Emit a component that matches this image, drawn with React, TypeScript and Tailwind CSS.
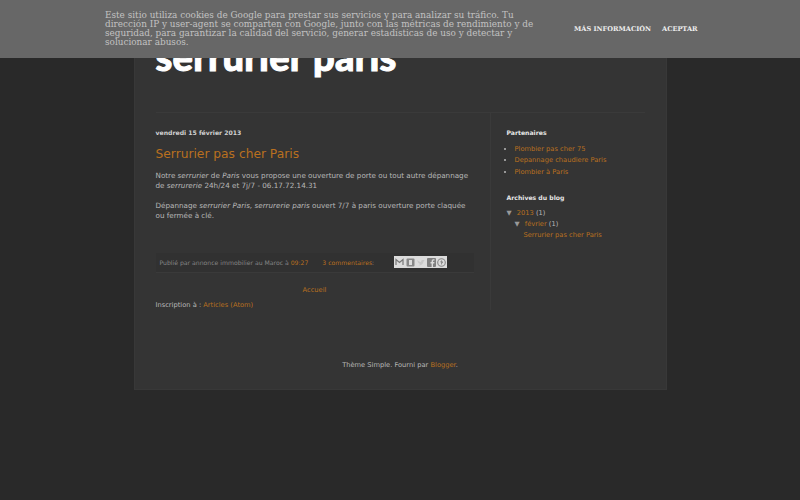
import React from 'react'

function ShareIcons() {
  return (
    <div className="flex ml-[20px] bg-[#dcdcdc] h-[12px] w-[53px] items-center">
      <span className="w-[10.6px] h-[12px] flex items-center justify-center">
        <svg width="9" height="8" viewBox="0 0 9 8"><path d="M1 7V1.500L4.500 4.500L8 1.500V7" fill="none" stroke="#777" strokeWidth="1.2" /></svg>
      </span>
      <span className="w-[10.6px] h-[12px] flex items-center justify-center">
        <svg width="9" height="9" viewBox="0 0 9 9"><rect x="0.5" y="0.5" width="8" height="8" rx="1" fill="#888" /><rect x="3" y="2" width="3" height="5" fill="#ddd" /></svg>
      </span>
      <span className="w-[10.6px] h-[12px] flex items-center justify-center">
        <svg width="9" height="9" viewBox="0 0 9 9"><path d="M1 2Q3 4 5 4Q5 1.500 7 2L8.500 2Q8 3 7.500 3.500Q7 7.500 2 7.500Q3.500 7 4 6Q2 5.500 1 2Z" fill="#c8c8c8" /></svg>
      </span>
      <span className="w-[10.6px] h-[12px] flex items-center justify-center">
        <svg width="9" height="9" viewBox="0 0 9 9"><rect width="9" height="9" rx="1" fill="#808080" /><path d="M6 9V5.500H7.200L7.400 4H6V3.200Q6 2.500 6.700 2.500H7.500V1.200H6.300Q4.600 1.200 4.600 3V4H3.500V5.500H4.600V9Z" fill="#dcdcdc" /></svg>
      </span>
      <span className="w-[10.6px] h-[12px] flex items-center justify-center">
        <svg width="9" height="9" viewBox="0 0 9 9"><circle cx="4.500" cy="4.500" r="3.800" fill="none" stroke="#888" strokeWidth="1.1" /><path d="M4.500 2.500V6.500M3.200 4Q4.500 2.500 5.800 4Q5.500 5.500 4.200 5" fill="none" stroke="#888" strokeWidth="0.9" /></svg>
      </span>
    </div>
  )
}

function A({ children }: { children: React.ReactNode }) {
  return <a className="text-[#b9701f]">{children}</a>
}

export default function App() {
  return (
    <div className="relative min-h-[500px] bg-[#292929] overflow-hidden font-['DejaVu_Sans',sans-serif] text-[6.7px] leading-[11px] text-[#b8b8b8]">
      <div className="fixed top-0 left-0 right-0 h-[58px] bg-[#676767] flex items-start pl-[105px] z-10">
        <p className="w-[435px] pt-[11px] font-['DejaVu_Serif',serif] text-[8.9px] leading-[9px] text-[#c2c2c2]">
          Este sitio utiliza cookies de Google para prestar sus servicios y para analizar su tráfico. Tu dirección IP y user-agent se comparten con Google, junto con las métricas de rendimiento y de seguridad, para garantizar la calidad del servicio, generar estadísticas de uso y detectar y solucionar abusos.
        </p>
        <div className="flex gap-[11px] ml-[34px] pt-[24px] font-['DejaVu_Serif',serif] text-[6.6px] leading-[11px] font-bold text-[#eeeeee]">
          <span>MÁS INFORMACIÓN</span>
          <span>ACEPTAR</span>
        </div>
      </div>

      <div className="flex justify-center">
        <div className="w-[533px] h-[390px] bg-[#343434] border-x border-b border-[#383838] pl-[21px] pr-[21px]">
          <header className="h-[113px] pt-[35px] border-b border-[#3a3a3a]">
            <h1 className="font-['Lato',sans-serif] font-black text-[38px] leading-[42px] tracking-[0.3px] [-webkit-text-stroke:1px_white] text-white">serrurier paris</h1>
          </header>

          <div className="flex">
            <main className="w-[318px]">
              <h2 className="mt-[15px] font-bold text-[6.15px] leading-[10px] text-[#d0d0d0]">vendredi 15 février 2013</h2>
              <h3 className="mt-[6px] text-[12.25px] leading-[20px] text-[#b9701f]">Serrurier pas cher Paris</h3>
              <div className="mt-[6px] text-[7.2px] leading-[10.5px] pt-[0.5px]">
                <p>
                  Notre <i>serrurier</i> de <i>Paris</i> vous propose une ouverture de porte ou tout autre dépannage de <i>serrurerie</i> 24h/24 et 7j/7 - 06.17.72.14.31
                </p>
                <p className="mt-[9px]">
                  Dépannage <i>serrurier Paris, serrurerie paris</i> ouvert 7/7 à paris ouverture porte claquée ou fermée à clé.
                </p>
              </div>

              <div className="mt-[31px] h-[20px] pl-[4px] flex items-center bg-[#313131] border-b border-[#3a3a3a] text-[6.13px] text-[#858585]">
                <span>Publié par annonce immobilier au Maroc à <A>09:27</A></span>
                <span className="ml-[14px]"><A>3 commentaires</A>:</span>
                <ShareIcons />
              </div>

              <div className="mt-[12px] text-center"><A>Accueil</A></div>
              <div className="mt-[4px]">Inscription à : <A>Articles (Atom)</A></div>
            </main>

            <aside className="ml-[16px] h-[197px] border-l border-[#3a3a3a] pl-[16px] flex-1">
              <h2 className="mt-[15px] font-bold text-[6.15px] leading-[10px] text-[#e6e6e6]">Partenaires</h2>
              <ul className="mt-[5.5px] list-disc pl-[8px] leading-[11.5px]">
                <li><A>Plombier pas cher 75</A></li>
                <li><A>Depannage chaudiere Paris</A></li>
                <li><A>Plombier à Paris</A></li>
              </ul>
              <h2 className="mt-[14.5px] font-bold text-[6.15px] leading-[10px] text-[#e6e6e6]">Archives du blog</h2>
              <div className="mt-[5.5px] leading-[11px]">
                <div><span className="text-[#999] mr-[3px]">▼</span> <A>2013</A> (1)</div>
                <div className="pl-[8px]"><span className="text-[#999] mr-[3px]">▼</span> <A>février</A> (1)</div>
                <div className="pl-[17px]"><A>Serrurier pas cher Paris</A></div>
              </div>
            </aside>
          </div>

          <div className="mt-[49px] text-center">Thème Simple. Fourni par <A>Blogger</A>.</div>
        </div>
      </div>
    </div>
  )
}
